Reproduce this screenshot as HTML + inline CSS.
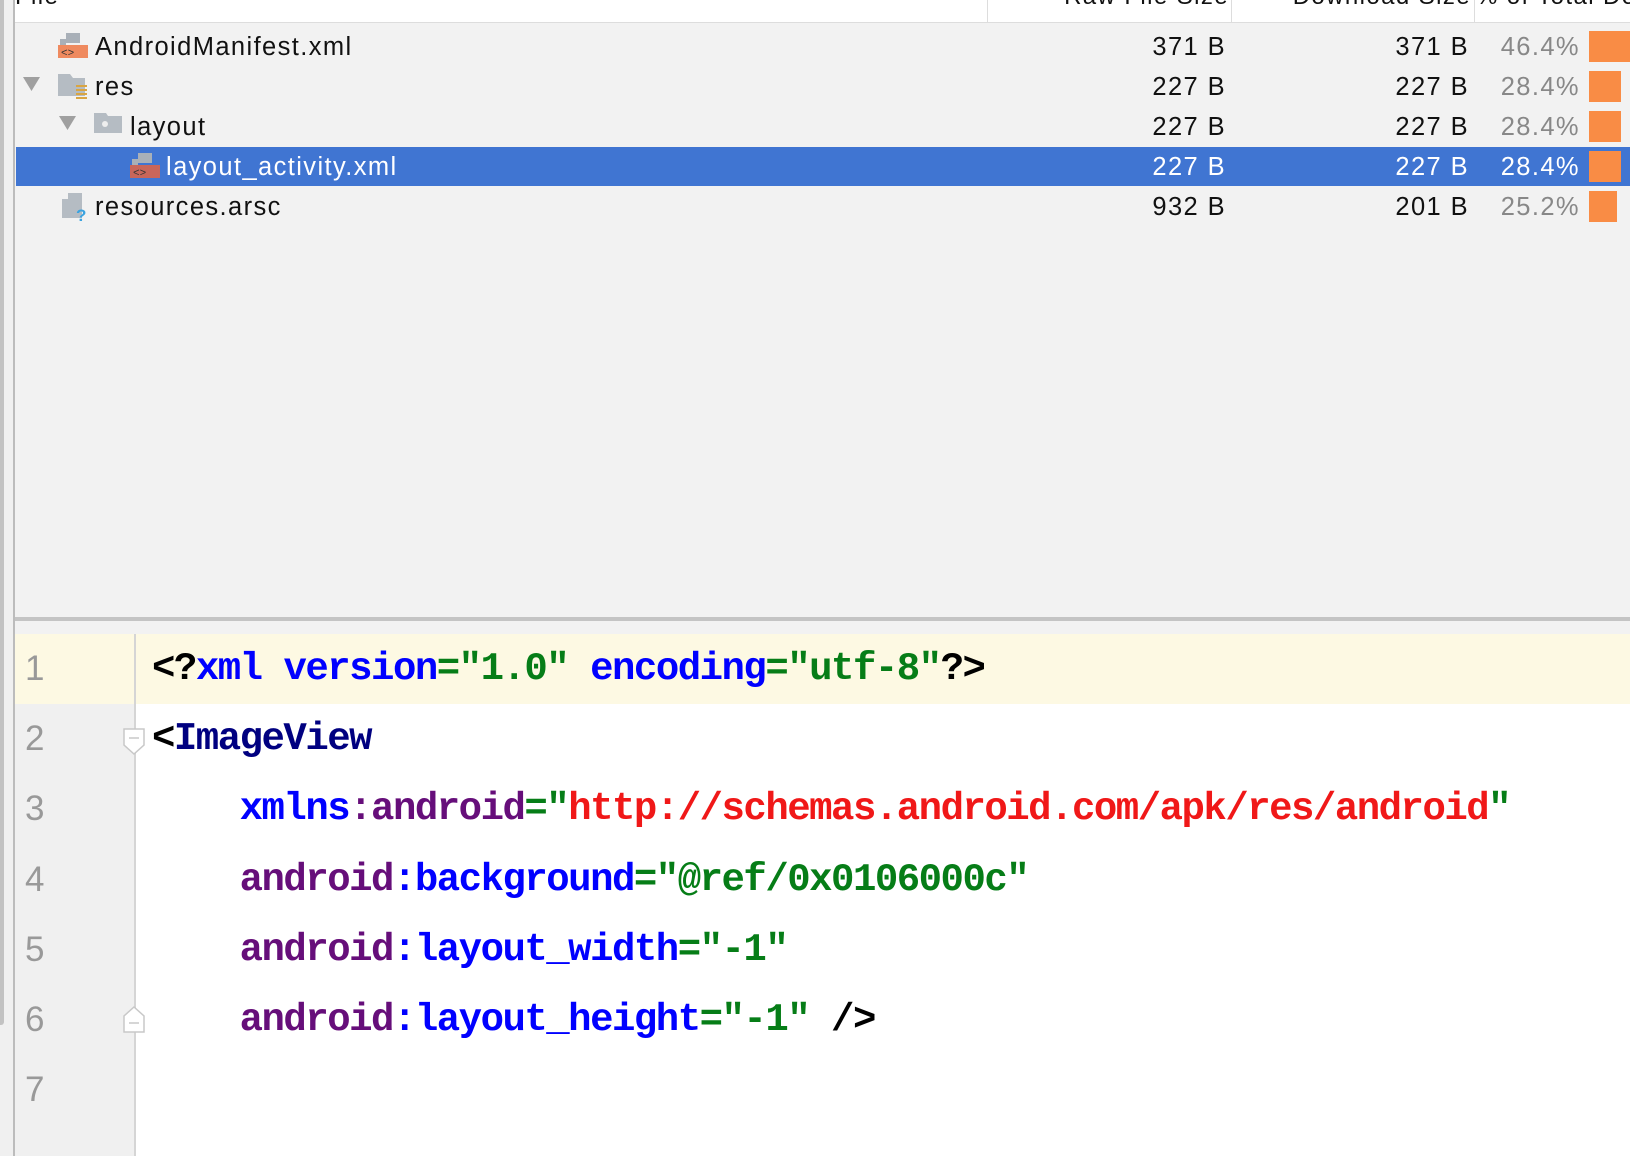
<!DOCTYPE html>
<html><head><meta charset="utf-8"><style>
*{margin:0;padding:0;box-sizing:border-box}
body{width:1630px;height:1156px;overflow:hidden;background:#fff;position:relative;font-family:"Liberation Sans",sans-serif}
.a{position:absolute}
.t{position:absolute;font-size:25.5px;letter-spacing:1.4px;line-height:40px;color:#111;white-space:nowrap}
.r{text-align:right}
.bar{position:absolute;height:31px;background:#f98c45}
.code{position:absolute;left:152px;font-family:"Liberation Mono",monospace;font-size:39px;letter-spacing:-1.5px;font-weight:bold;line-height:70px;white-space:pre;color:#000}
.ln{position:absolute;left:25px;font-family:"Liberation Sans",sans-serif;font-size:35px;color:#999;line-height:70px}
.k{color:#0000ff}.g{color:#067d17}.p{color:#660e7a}.n{color:#000080}.red{color:#f01818}
</style></head><body>
<div class="a" style="left:0;top:0;width:1630px;height:23px;background:#fff;border-bottom:1px solid #ddd"></div>
<div class="t" style="left:15px;top:-23px;font-size:24px">File</div>
<div class="t r" style="left:900px;width:329px;top:-23px;font-size:24px">Raw File Size</div>
<div class="t r" style="left:1240px;width:231px;top:-23px;font-size:24px">Download Size</div>
<div class="t" style="left:1476px;top:-23px;font-size:24px">% of Total Do</div>
<div class="a" style="left:987px;top:0;width:1px;height:23px;background:#ddd"></div>
<div class="a" style="left:1231px;top:0;width:1px;height:23px;background:#ddd"></div>
<div class="a" style="left:1474px;top:0;width:1px;height:23px;background:#ddd"></div>
<div class="a" style="left:0;top:23px;width:1630px;height:594px;background:#f2f2f2"></div>
<div class="a" style="left:0;top:617px;width:1630px;height:4px;background:#c4c4c4"></div>
<div class="a" style="left:0;top:621px;width:1630px;height:13px;background:#f2f2f2"></div>
<div class="a" style="left:16px;top:147px;width:1614px;height:39px;background:#4075d2"></div>
<svg class="a" style="left:0;top:27px" width="200" height="200">
 <path d="M66 6h14v10h-14z" fill="#a9b0b8"/><path d="M60 12h6v6h-6z" fill="#a9b0b8"/>
 <rect x="58" y="18" width="30" height="13" fill="#ef8a5f"/><text x="61" y="29" font-size="11" fill="#333" font-family="Liberation Mono">&lt;&gt;</text>
 <path d="M23 50h17l-8.5 14z" fill="#a0a0a0"/>
 <path d="M58 47h12l3 4h12v18h-27z" fill="#b5bcc3"/>
 <g fill="#d9a542"><rect x="76" y="58" width="11" height="2"/><rect x="76" y="62" width="11" height="2"/><rect x="76" y="66" width="11" height="2"/><rect x="76" y="70" width="11" height="2"/></g>
 <path d="M59 89h17l-8.5 14z" fill="#a0a0a0"/>
 <path d="M94 86h12l2 3h14v17h-28z" fill="#b5bcc3"/><circle cx="105" cy="97" r="3" fill="#eee"/>
 <path d="M138 126h14v10h-14z" fill="#a9b0b8"/><path d="M132 132h6v6h-6z" fill="#a9b0b8"/>
 <rect x="130" y="138" width="30" height="13" fill="#c9665a"/><text x="133" y="149" font-size="11" fill="#333" font-family="Liberation Mono">&lt;&gt;</text>
 <path d="M68 166h14v25h-14z" fill="#b5bcc3"/><path d="M62 172h6v19h-6z" fill="#b5bcc3"/>
 <text x="76" y="194" font-size="17" font-weight="bold" fill="#3aa3e0" font-family="Liberation Sans">?</text>
</svg>
<div class="t" style="left:95px;top:27px">AndroidManifest.xml</div>
<div class="t" style="left:95px;top:67px">res</div>
<div class="t" style="left:130px;top:107px">layout</div>
<div class="t" style="left:166px;top:147px;color:#fff">layout_activity.xml</div>
<div class="t" style="left:95px;top:187px">resources.arsc</div>
<div class="t r" style="left:1000px;width:226px;top:27px">371 B</div>
<div class="t r" style="left:1000px;width:226px;top:67px">227 B</div>
<div class="t r" style="left:1000px;width:226px;top:107px">227 B</div>
<div class="t r" style="left:1000px;width:226px;top:147px;color:#fff">227 B</div>
<div class="t r" style="left:1000px;width:226px;top:187px">932 B</div>
<div class="t r" style="left:1240px;width:229px;top:27px">371 B</div>
<div class="t r" style="left:1240px;width:229px;top:67px">227 B</div>
<div class="t r" style="left:1240px;width:229px;top:107px">227 B</div>
<div class="t r" style="left:1240px;width:229px;top:147px;color:#fff">227 B</div>
<div class="t r" style="left:1240px;width:229px;top:187px">201 B</div>
<div class="t r" style="left:1470px;width:110px;top:27px;color:#888">46.4%</div>
<div class="t r" style="left:1470px;width:110px;top:67px;color:#888">28.4%</div>
<div class="t r" style="left:1470px;width:110px;top:107px;color:#888">28.4%</div>
<div class="t r" style="left:1470px;width:110px;top:147px;color:#fff">28.4%</div>
<div class="t r" style="left:1470px;width:110px;top:187px;color:#888">25.2%</div>
<div class="bar" style="left:1589px;top:31px;width:41px"></div>
<div class="bar" style="left:1589px;top:71px;width:32px"></div>
<div class="bar" style="left:1589px;top:111px;width:32px"></div>
<div class="bar" style="left:1589px;top:151px;width:32px"></div>
<div class="bar" style="left:1589px;top:191px;width:28px"></div>
<div class="a" style="left:0;top:634px;width:1630px;height:522px;background:#fff"></div>
<div class="a" style="left:0;top:634px;width:135px;height:522px;background:#f0f0f0"></div>
<div class="a" style="left:0;top:634px;width:1630px;height:70px;background:#fdf9e3"></div>
<div class="a" style="left:134px;top:634px;width:2px;height:522px;background:#d5d5d5"></div>
<div class="a" style="left:0;top:0;width:4px;height:1025px;background:#c2c2c2;border-radius:0 0 3px 0"></div>
<div class="a" style="left:4px;top:0;width:9px;height:1156px;background:#f0f0f0"></div>
<div class="a" style="left:13px;top:0;width:2px;height:1156px;background:#bcbcbc"></div>
<svg class="a" style="left:122px;top:727px" width="26" height="30"><path d="M2 2h20v16l-10 9l-10-9z" fill="#fff" stroke="#c8c8c8" stroke-width="1.5"/><path d="M7 11h10" stroke="#c8c8c8" stroke-width="1.5"/></svg>
<svg class="a" style="left:122px;top:1004px" width="26" height="30"><path d="M2 28h20v-16l-10-9l-10 9z" fill="#fff" stroke="#c8c8c8" stroke-width="1.5"/><path d="M7 19h10" stroke="#c8c8c8" stroke-width="1.5"/></svg>
<div class="ln" style="top:634px">1</div>
<div class="ln" style="top:704px">2</div>
<div class="ln" style="top:774px">3</div>
<div class="ln" style="top:845px">4</div>
<div class="ln" style="top:915px">5</div>
<div class="ln" style="top:985px">6</div>
<div class="ln" style="top:1055px">7</div>
<div class="code" style="top:634px">&lt;?<span class="k">xml</span> <span class="k">version</span><span class="g">="1.0"</span> <span class="k">encoding</span><span class="g">="utf-8"</span>?&gt;</div>
<div class="code" style="top:704px">&lt;<span class="n">ImageView</span></div>
<div class="code" style="top:774px">    <span class="k">xmlns</span><span class="p">:android</span><span class="g">="</span><span class="red">http://schemas.android.com/apk/res/android</span><span class="g">"</span></div>
<div class="code" style="top:845px">    <span class="p">android</span><span class="k">:background</span><span class="g">="@ref/0x0106000c"</span></div>
<div class="code" style="top:915px">    <span class="p">android</span><span class="k">:layout_width</span><span class="g">="-1"</span></div>
<div class="code" style="top:985px">    <span class="p">android</span><span class="k">:layout_height</span><span class="g">="-1"</span> /&gt;</div>
</body></html>
